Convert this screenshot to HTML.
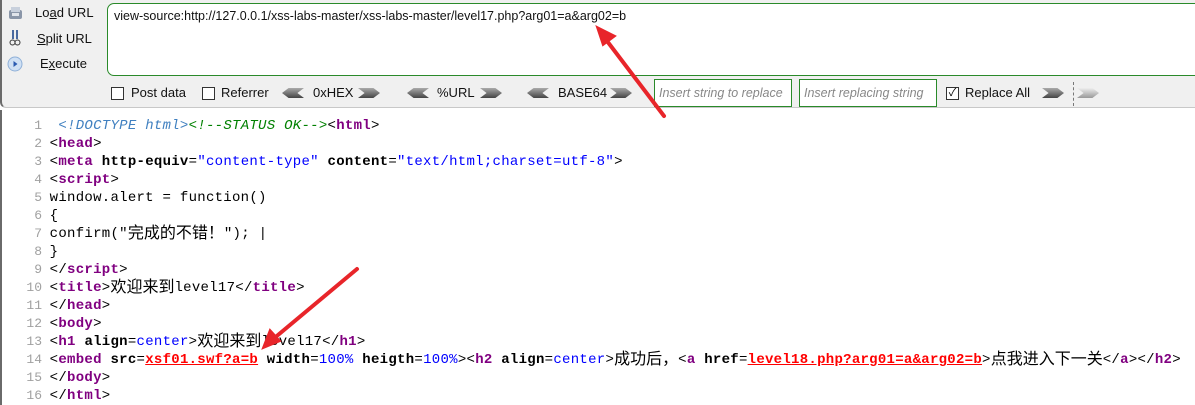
<!DOCTYPE html>
<html><head><meta charset="utf-8"><style>
*{margin:0;padding:0;box-sizing:border-box}
body{width:1195px;height:405px;overflow:hidden;background:#fff;font-family:"Liberation Sans","Noto Sans CJK SC",sans-serif;position:relative}
#tb{position:absolute;left:0;top:0;width:1195px;height:108px;background:#f0f0f0;border-bottom:1px solid #c8c8c8;border-left:2px solid #6a6a6a;border-bottom-left-radius:6px}
.lb{position:absolute;font-size:13px;color:#111}
#url{position:absolute;left:105px;top:3px;width:1095px;height:73px;border:1px solid #2a8a2a;border-radius:7px;background:#fff;font-size:12.5px;padding:5px 6px;color:#111}
.cb{position:absolute;top:87px;width:13px;height:13px;border:1px solid #333;background:#fff}
.t{position:absolute;top:85px;font-size:13px;color:#111}
.ar{position:absolute;top:88px;width:22px;height:10px;background:linear-gradient(#aaa,#444)}
.al{clip-path:polygon(30% 0,100% 0,70% 50%,100% 100%,30% 100%,0 50%)}
.arr{clip-path:polygon(0 0,70% 0,100% 50%,70% 100%,0 100%,30% 50%)}
.in{position:absolute;top:79px;height:28px;border:1px solid #2a8a2a;background:#fff;font-style:italic;color:#888;font-size:12.5px;padding:6px 4px;white-space:nowrap;overflow:hidden}
#code{position:absolute;left:0;top:110px;width:1195px;height:295px;border-left:2px solid #6a6a6a}
.l{position:absolute;left:0;height:18px;font-family:"Liberation Mono","Noto Sans CJK SC",monospace;font-size:14px;line-height:18px;white-space:pre;color:#000;letter-spacing:0.28px}
.n{display:inline-block;width:40px;text-align:right;color:#a0a0a0;font-size:13px;margin-right:-1px;letter-spacing:0}
b{color:#800080}
.k{font-weight:bold;color:#000}
.v{color:#0000ff}
.u{color:#f00;font-weight:bold;text-decoration:underline}
.cm{color:#008000;font-style:italic}
.dt{color:#4080c0;font-style:italic}
.z{font-family:"Noto Sans CJK SC",sans-serif;font-size:16px;line-height:0;position:relative;top:1px;letter-spacing:0}
</style></head><body>
<div id="tb">
<svg style="position:absolute;left:6px;top:5px" width="16" height="16"><rect x="1" y="5" width="13" height="9" rx="2" fill="#8a96a8"/><rect x="3" y="2" width="9" height="5" fill="#c8d0dc"/><rect x="4" y="8" width="7" height="3" fill="#e0e4ea"/></svg>
<svg style="position:absolute;left:7px;top:29px" width="12" height="18"><path d="M4 1v9M8 1v9" stroke="#4a6aa0" stroke-width="2"/><circle cx="3.5" cy="13.5" r="2.5" fill="none" stroke="#333"/><circle cx="8.5" cy="13.5" r="2.5" fill="none" stroke="#333"/></svg>
<svg style="position:absolute;left:5px;top:56px" width="16" height="16"><circle cx="8" cy="8" r="7" fill="#cfe0f4" stroke="#8fb0d8"/><path d="M6.5 5l4 3-4 3z" fill="#2a5ab0"/></svg>
<div class="lb" style="left:33px;top:5px">Lo<u>a</u>d URL</div>
<div class="lb" style="left:35px;top:31px"><u>S</u>plit URL</div>
<div class="lb" style="left:38px;top:56px">E<u>x</u>ecute</div>
<div id="url">view-source:http://127.0.0.1/xss-labs-master/xss-labs-master/level17.php?arg01=a&amp;arg02=b</div>
<div class="cb" style="left:109px"></div><div class="t" style="left:129px">Post data</div>
<div class="cb" style="left:200px"></div><div class="t" style="left:219px">Referrer</div>
<div class="ar al" style="left:280px"></div><div class="t" style="left:311px">0xHEX</div><div class="ar arr" style="left:356px"></div>
<div class="ar al" style="left:405px"></div><div class="t" style="left:435px">%URL</div><div class="ar arr" style="left:478px"></div>
<div class="ar al" style="left:525px"></div><div class="t" style="left:556px">BASE64</div><div class="ar arr" style="left:608px"></div>
<div class="in" style="left:652px;width:138px">Insert string to replace</div>
<div class="in" style="left:797px;width:138px">Insert replacing string</div>
<div class="cb" style="left:944px;font-size:11px;line-height:11px;text-align:center">✓</div><div class="t" style="left:963px">Replace All</div>
<div class="ar arr" style="left:1040px"></div>
<div style="position:absolute;left:1071px;top:82px;height:24px;border-left:1px dashed #777"></div>
<div class="ar arr" style="left:1075px;background:linear-gradient(#eee,#999)"></div>
</div>
<div id="code">
<div class="l" style="top:7px"><span class="n">1</span>  <span class="dt">&lt;!DOCTYPE html&gt;</span><span class="cm">&lt;!--STATUS OK--&gt;</span>&lt;<b class="k" style="color:#800080">html</b>&gt;</div>
<div class="l" style="top:25px"><span class="n">2</span> &lt;<b class="k" style="color:#800080">head</b>&gt;</div>
<div class="l" style="top:43px"><span class="n">3</span> &lt;<b class="k" style="color:#800080">meta</b> <span class="k">http-equiv</span>=<span class="v">"content-type"</span> <span class="k">content</span>=<span class="v">"text/html;charset=utf-8"</span>&gt;</div>
<div class="l" style="top:61px"><span class="n">4</span> &lt;<b class="k" style="color:#800080">script</b>&gt;</div>
<div class="l" style="top:79px"><span class="n">5</span> window.alert = function()</div>
<div class="l" style="top:97px"><span class="n">6</span> {</div>
<div class="l" style="top:115px"><span class="n">7</span> confirm("<span class="z">完成的不错！</span>"); |</div>
<div class="l" style="top:133px"><span class="n">8</span> }</div>
<div class="l" style="top:151px"><span class="n">9</span> &lt;/<b class="k" style="color:#800080">script</b>&gt;</div>
<div class="l" style="top:169px"><span class="n">10</span> &lt;<b class="k" style="color:#800080">title</b>&gt;<span class="z">欢迎来到</span>level17&lt;/<b class="k" style="color:#800080">title</b>&gt;</div>
<div class="l" style="top:187px"><span class="n">11</span> &lt;/<b class="k" style="color:#800080">head</b>&gt;</div>
<div class="l" style="top:205px"><span class="n">12</span> &lt;<b class="k" style="color:#800080">body</b>&gt;</div>
<div class="l" style="top:223px"><span class="n">13</span> &lt;<b class="k" style="color:#800080">h1</b> <span class="k">align</span>=<span class="v">center</span>&gt;<span class="z">欢迎来到</span>level17&lt;/<b class="k" style="color:#800080">h1</b>&gt;</div>
<div class="l" style="top:241px"><span class="n">14</span> &lt;<b class="k" style="color:#800080">embed</b> <span class="k">src</span>=<span class="u">xsf01.swf?a=b</span> <span class="k">width</span>=<span class="v">100%</span> <span class="k">heigth</span>=<span class="v">100%</span>&gt;&lt;<b class="k" style="color:#800080">h2</b> <span class="k">align</span>=<span class="v">center</span>&gt;<span class="z">成功后，</span>&lt;<b class="k" style="color:#800080">a</b> <span class="k">href</span>=<span class="u">level18.php?arg01=a&amp;arg02=b</span>&gt;<span class="z">点我进入下一关</span>&lt;/<b class="k" style="color:#800080">a</b>&gt;&lt;/<b class="k" style="color:#800080">h2</b>&gt;</div>
<div class="l" style="top:259px"><span class="n">15</span> &lt;/<b class="k" style="color:#800080">body</b>&gt;</div>
<div class="l" style="top:277px"><span class="n">16</span> &lt;/<b class="k" style="color:#800080">html</b>&gt;</div>
</div>
<svg style="position:absolute;left:0;top:0" width="1195" height="405">
<g stroke="#e8252a" stroke-width="4" stroke-linecap="round" fill="#e8252a">
<line x1="664" y1="116" x2="604" y2="37"/>
<polygon points="597,27 615,36 603,45" stroke-width="2"/>
<line x1="357" y1="269" x2="272" y2="340"/>
<polygon points="263,348 270,330 280,341" stroke-width="2"/>
</g></svg>
</body></html>
